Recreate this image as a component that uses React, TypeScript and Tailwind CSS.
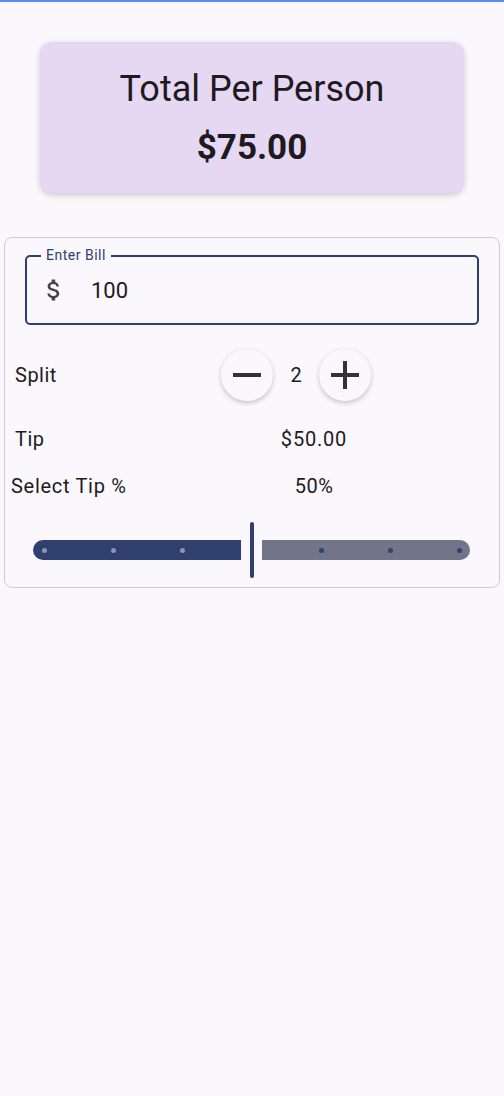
import React from "react";
import { MdAttachMoney } from "react-icons/md";

const font = { fontFamily: "Roboto, 'Noto Sans', sans-serif" };

function RoundButton({ children }: { children: React.ReactNode }) {
  return (
    <button className="w-[52px] h-[52px] rounded-full bg-[#faf7fd] shadow-[0_2px_5px_rgba(0,0,0,0.22)] flex items-center justify-center text-[#333333]">
      {children}
    </button>
  );
}

export default function App() {
  const leftDots = [11, 80, 149];
  const rightDots = [59, 128, 197];

  return (
    <div className="min-h-screen bg-[#faf7fd] border-t-2 border-[#5b8def] text-[#1d1b20]" style={font}>
      {/* total card */}
      <div className="mx-[40px] mt-[40px] h-[151px] rounded-xl bg-[#e6d8f3] shadow-[0_2px_6px_rgba(0,0,0,0.2)] flex flex-col items-center">
        <div className="text-[36px] leading-[40px] mt-[27px]">Total Per Person</div>
        <div className="text-[35px] leading-[40px] font-bold mt-[19px]">$75.00</div>
      </div>

      {/* form box */}
      <div className="mx-[4px] mt-[44px] border border-[#cfcbd3] rounded-lg px-[20px] pt-[17px] pb-[9px] flex flex-col">
        <div className="relative h-[70px] border-2 border-[#2e3f6f] rounded-[5px] flex items-center">
          <span className="absolute -top-[10px] left-[14px] px-[5px] bg-[#faf7fd] text-[14px] leading-[16px] text-[#2e3f6f] tracking-[0.5px]">
            Enter Bill
          </span>
          <MdAttachMoney className="ml-[13px] text-[#45424b]" size={28} />
          <span className="ml-[23px] text-[22px]">100</span>
        </div>

        <div className="flex items-center h-[52px] mt-[24px] -ml-[10px]">
          <span className="w-[206px] text-[20px] tracking-[0.5px]">Split</span>
          <RoundButton>
            <svg width="30" height="30" viewBox="0 0 30 30">
              <rect x="1" y="13" width="28" height="4" fill="currentColor" />
            </svg>
          </RoundButton>
          <span className="w-[46px] text-center text-[20px]">2</span>
          <RoundButton>
            <svg width="30" height="30" viewBox="0 0 30 30">
              <rect x="1" y="13" width="28" height="4" fill="currentColor" />
              <rect x="13" y="1" width="4" height="28" fill="currentColor" />
            </svg>
          </RoundButton>
        </div>

        <div className="flex items-center h-[24px] mt-[26px] -ml-[10px]">
          <span className="w-[244px] text-[20px] tracking-[0.5px]">Tip</span>
          <span className="w-[110px] text-center text-[20px] tracking-[0.8px]">$50.00</span>
        </div>

        <div className="flex items-center h-[24px] mt-[23px] -ml-[14px]">
          <span className="w-[253px] text-[20px] tracking-[0.7px]">Select Tip %</span>
          <span className="w-[100px] text-center text-[20px] tracking-[0.5px]">50%</span>
        </div>

        <div className="flex items-center h-[56px] mt-[24px] ml-[8px]">
          <div className="relative w-[208px] h-[20px] bg-[#2f3f6f] rounded-l-full rounded-r-[3px]">
            {leftDots.map((x) => (
              <span key={x} className="absolute top-[8px] w-[5px] h-[5px] -ml-[2px] rounded-full bg-[#8f93a9]" style={{ left: x }} />
            ))}
          </div>
          <div className="ml-[9px] w-[4px] h-[56px] rounded-full bg-[#2f3f6f]" />
          <div className="ml-[8px] relative w-[208px] h-[20px] bg-[#717589] rounded-r-full rounded-l-[3px]">
            {rightDots.map((x) => (
              <span key={x} className="absolute top-[8px] w-[5px] h-[5px] -ml-[2px] rounded-full bg-[#2f3f6f]" style={{ left: x }} />
            ))}
          </div>
        </div>
      </div>
    </div>
  );
}
